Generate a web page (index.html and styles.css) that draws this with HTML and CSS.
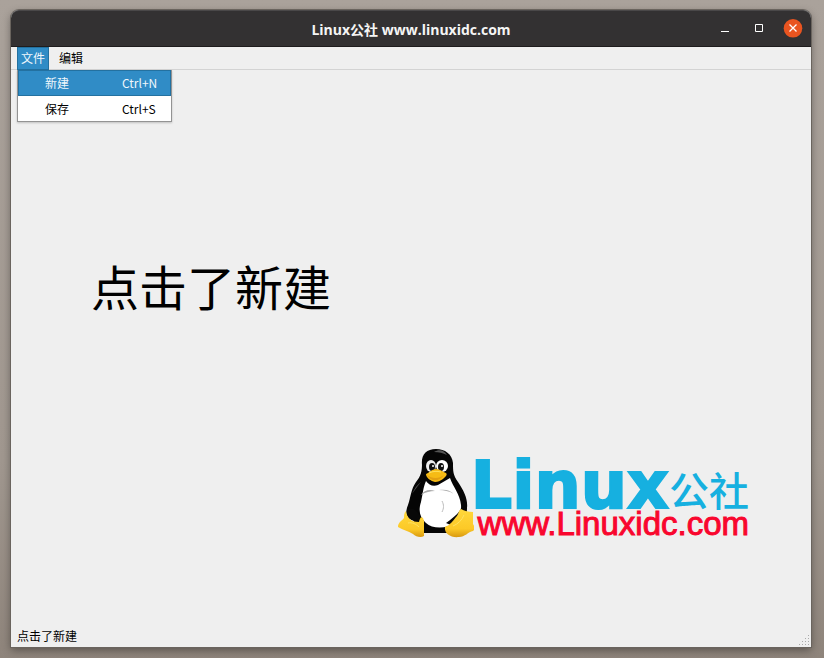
FILE: index.html
```html
<!DOCTYPE html>
<html lang="zh-CN">
<head>
    <meta charset="UTF-8">
    <meta name="viewport" content="width=device-width, initial-scale=1.0">
    <title>Linux公社 www.linuxidc.com</title>
    <link rel="stylesheet" href="styles.css">
</head>
<body>
    <div class="window">
        <header class="titlebar">
            <h1 class="title">Linux公社 www.linuxidc.com</h1>
            <div class="window-buttons">
                <button class="window-button" type="button" aria-label="最小化">
                    <svg width="20" height="20" viewBox="0 0 20 20"><path d="M6 12.500h8" stroke="#fff"/></svg>
                </button>
                <button class="window-button" type="button" aria-label="最大化">
                    <svg width="20" height="20" viewBox="0 0 20 20"><path d="M6.500 5.500h7v7h-7z" fill="none" stroke="#fff"/></svg>
                </button>
                <button class="window-button close" type="button" aria-label="关闭">
                    <svg width="20" height="20" viewBox="0 0 20 20"><circle cx="10" cy="9.300" r="9.300" fill="#e95420"/><path d="M6.500 5.500l7 7M13.500 5.500l-7 7" stroke="#fff" stroke-width="1.300"/></svg>
                </button>
            </div>
        </header>

        <nav class="menubar">
            <div class="menu">
                <button class="menu-title active" type="button">文件</button>
                <div class="dropdown">
                    <button class="menu-item active" type="button"><span>新建</span><span>Ctrl+N</span></button>
                    <button class="menu-item" type="button"><span>保存</span><span>Ctrl+S</span></button>
                </div>
            </div>
            <div class="menu">
                <button class="menu-title" type="button">编辑</button>
            </div>
        </nav>

        <main class="content">
            <p class="message">点击了新建</p>
            <div class="logo">
                <svg class="tux" width="76" height="90" viewBox="0 0 76 90">
                    <defs>
                        <linearGradient id="foot" x1="0" y1="0" x2="0" y2="1">
                            <stop offset="0" stop-color="#ffd83c"/>
                            <stop offset="0.7" stop-color="#fcc927"/>
                            <stop offset="1" stop-color="#d99a10"/>
                        </linearGradient>
                    </defs>
                    <path d="M24 17C23 7 28 1 38 1c9 0 16 5 17 14 0 8 0 12 5 19 6 9 10 17 9 26 0 7-2 12-7 16L53 85H24l-9-13c-7-2-8-8-5-15 3-9 3-16 8-23 5-6 6-11 6-18z" fill="#050505"/>
                    <path d="M28 33c3 4 7 6 12 4l12-7c3 9 10 16 11 27 1 9-3 14-7 18-7 6-22 6-28 0-6-5-8-12-5-21 2-9 2-14 5-21z" fill="#fff"/>
                    <path d="M23 47c3-5 9-6 14-4-5 0-9 1-14 4zM41 42c6-1 11 0 15 4-5-3-10-4-15-4z" fill="#aaa"/>
                    <path d="M44 53c2 4 2 7 0 11" fill="none" stroke="#bbb"/>
                    <path d="M36 4c5-3 10-2 13 3-4-2-8-3-13-3zM14 46c2-5 5-9 9-12-4 5-7 9-9 12z" fill="#555"/>
                    <ellipse cx="33" cy="18" rx="5" ry="6" fill="#eee"/>
                    <ellipse cx="44" cy="18" rx="6" ry="6" fill="#fff"/>
                    <ellipse cx="34" cy="19" rx="3" ry="4" fill="#111"/>
                    <ellipse cx="43" cy="19" rx="3" ry="4" fill="#111"/>
                    <circle cx="35" cy="18" r="1" fill="#fff"/>
                    <circle cx="44" cy="18" r="1" fill="#fff"/>
                    <path d="M28 26c3-1 6-5 10-5s7 3 10 4c2 2-1 4-3 6-3 2-5 3-8 3-4-1-9-4-9-8z" fill="#f6bb15"/>
                    <path d="M29 27c5 4 12 4 17 0-5 7-13 7-17 0z" fill="#e3a011"/>
                    <path d="M31 25c4-2 8-2 12-1" fill="none" stroke="#ffe15c"/>
                    <path d="M9 62c4-3 8-1 11 3l7 10-8-2c-7 0-12-5-10-11z" fill="#080808"/>
                    <path d="M64 57c-1 6-5 10-16 18l7 3 10-12z" fill="#080808"/>
                    <path d="M8 63c1 8 6 11 13 11 1-4 2-6 4-4l1 3v15c-3 2-8 1-11-2-5-3-10-4-15-7 0-5 4-6 6-9 0-3 0-5 2-7z" fill="url(#foot)"/>
                    <path d="M47 79c5-2 8-6 11-10 3-3 2-6 5-8 3 2 8 3 12 3v12c2 3 2 5 0 7-5 1-8 6-14 6-9 1-15-4-14-10z" fill="url(#foot)"/>
                    <path d="M55 78c5-2 9-6 11-11M10 75c4-1 8 1 11 4" fill="none" stroke="#ffe262"/>
                </svg>
                <div class="logo-text">
                    <div class="logo-name"><span class="logo-linux">Linux</span><span class="logo-club">公社</span></div>
                    <div class="logo-url">www.Linuxidc.com</div>
                </div>
            </div>
        </main>

        <footer class="statusbar">
            <span>点击了新建</span>
            <svg class="grip" width="12" height="12" viewBox="0 0 12 12">
                <path d="M9 .5h1M6 3.500h1M9 3.500h1M3 6.500h1M6 6.500h1M9 6.500h1M0 9.500h1M3 9.500h1M6 9.500h1M9 9.500h1" stroke="#aaa"/>
            </svg>
        </footer>
    </div>
</body>
</html>
```
FILE: styles.css
```css
* { box-sizing: border-box; }
body {
    margin: 0;
    min-height: 100vh;
    display: flex;
    padding: 10px 13px 11px 11px;
    background: linear-gradient(#aaa29b, #a0978f 70%, #8e847b);
    font-family: "Noto Sans CJK SC", sans-serif;
    font-size: 12px;
    color: #000;
}
button { font: inherit; color: inherit; border: 0; padding: 0; background: none; }
.window {
    flex: 1;
    display: flex;
    flex-direction: column;
    background: #efefef;
    border-radius: 8px 8px 0 0;
    box-shadow: 0 0 0 1px #6a645e, 0 3px 8px rgba(0, 0, 0, 0.4);
}

.titlebar {
    display: grid;
    grid-template-columns: 1fr auto 1fr;
    align-items: center;
    height: 37px;
    padding: 0 8px;
    background: #333132;
    border-top: 1px solid #4a4849;
    border-bottom: 1px solid #1e1c1d;
    border-radius: 8px 8px 0 0;
}
.title {
    grid-column: 2;
    margin: 0;
    padding-top: 2px;
    font-family: "Open Sans", "Noto Sans CJK SC", sans-serif;
    font-size: 14px;
    font-weight: bold;
    line-height: 20px;
    color: #f5f5f5;
}
.window-buttons { display: flex; justify-content: flex-end; gap: 14px; }
.window-button { width: 20px; height: 20px; }
.window-button svg { display: block; }

.menubar {
    display: flex;
    height: 23px;
    padding-left: 6px;
    gap: 6px;
    border-bottom: 1px solid #d3d3d3;
}
.menu { position: relative; }
.menu-title {
    display: block;
    height: 23px;
    padding: 0 3px 2px;
    line-height: 19px;
    border: 1px solid transparent;
}
.menu-title.active { background: #308cc6; border-color: #2371a0; color: #eff7fc; }
.dropdown {
    position: absolute;
    top: 23px;
    left: 0;
    width: 155px;
    background: #fff;
    border: 1px solid #939393;
    border-top: 0;
    box-shadow: 0 1px 2px rgba(0, 0, 0, 0.2);
}
.menu-item {
    display: grid;
    grid-template-columns: 77px 1fr;
    width: 100%;
    height: 26px;
    padding-left: 26px;
    line-height: 24px;
    text-align: left;
    border: 1px solid transparent;
}
.menu-item.active { background: #308cc6; border-color: #2371a0; color: #eff7fc; }
.menu-item:last-child { height: 25px; border-bottom: 0; }

.content { flex: 1; display: flex; flex-direction: column; justify-content: space-between; }
.message { margin: 0; padding: 179px 0 0 80px; font-size: 48px; line-height: 72px; }
.logo { display: flex; align-self: flex-end; padding: 0 62px 87px 0; }
.logo-text { margin-left: -3px; padding-top: 8px; }
.logo-name { display: flex; align-items: flex-start; height: 54px; color: #16b0e0; }
.logo-linux {
    font-family: "DejaVu Sans", sans-serif;
    font-size: 65px;
    font-weight: bold;
    line-height: 60px;
    -webkit-text-stroke: 2px #16b0e0;
}
.logo-club { font-size: 40px; font-weight: 500; line-height: 66px; }
.logo-url {
    font-family: "Liberation Sans", sans-serif;
    font-size: 33px;
    line-height: 28px;
    text-align: right;
    color: #f9062e;
    -webkit-text-stroke: 1px #f9062e;
}

.statusbar {
    display: flex;
    justify-content: space-between;
    align-items: flex-end;
    height: 22px;
    padding-left: 6px;
    line-height: 22px;
}
```
